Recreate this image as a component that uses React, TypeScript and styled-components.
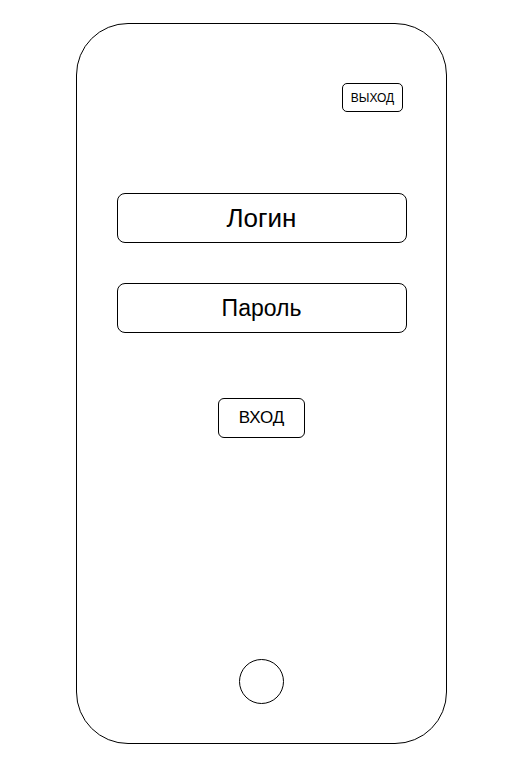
import React from "react";
import styled, { createGlobalStyle } from "styled-components";

const Global = createGlobalStyle`
  html, body { margin: 0; padding: 0; background: #fff; }
  * { box-sizing: border-box; }
  body { font-family: "Liberation Sans", Arial, sans-serif; color: #000; }
`;

const Phone = styled.div`
  margin: 23px 0 0 76px;
  width: 371px;
  height: 721px;
  border: 1px solid #000;
  border-radius: 52px;
  display: flex;
  flex-direction: column;
  align-items: center;
`;

const TopBar = styled.div`
  align-self: stretch;
  display: flex;
  justify-content: flex-end;
  padding: 59px 43px 0 0;
`;

const SmallButton = styled.button`
  width: 61px;
  height: 29px;
  border: 1px solid #000;
  border-radius: 5px;
  background: #fff;
  font-family: "Liberation Sans", Arial, sans-serif;
  font-size: 12px;
  color: #000;
  padding: 0;
`;

const Field = styled.div<{ $size: number; $top: number }>`
  margin-top: ${(p) => p.$top}px;
  width: 290px;
  height: 50px;
  border: 1px solid #000;
  border-radius: 8px;
  display: flex;
  align-items: center;
  justify-content: center;
  font-size: ${(p) => p.$size}px;
`;

const EnterButton = styled.button`
  margin-top: 65px;
  width: 87px;
  height: 40px;
  border: 1px solid #000;
  border-radius: 6px;
  background: #fff;
  font-family: "Liberation Sans", Arial, sans-serif;
  font-size: 17px;
  color: #000;
  padding: 0;
`;

const HomeButton = styled.div`
  margin-top: auto;
  margin-bottom: 39px;
  width: 45px;
  height: 45px;
  border: 1px solid #000;
  border-radius: 50%;
`;

export default function App() {
  return (
    <>
      <Global />
      <Phone>
        <TopBar>
          <SmallButton>ВЫХОД</SmallButton>
        </TopBar>
        <Field $size={26} $top={81}>Логин</Field>
        <Field $size={23} $top={40}>Пароль</Field>
        <EnterButton>ВХОД</EnterButton>
        <HomeButton />
      </Phone>
    </>
  );
}
